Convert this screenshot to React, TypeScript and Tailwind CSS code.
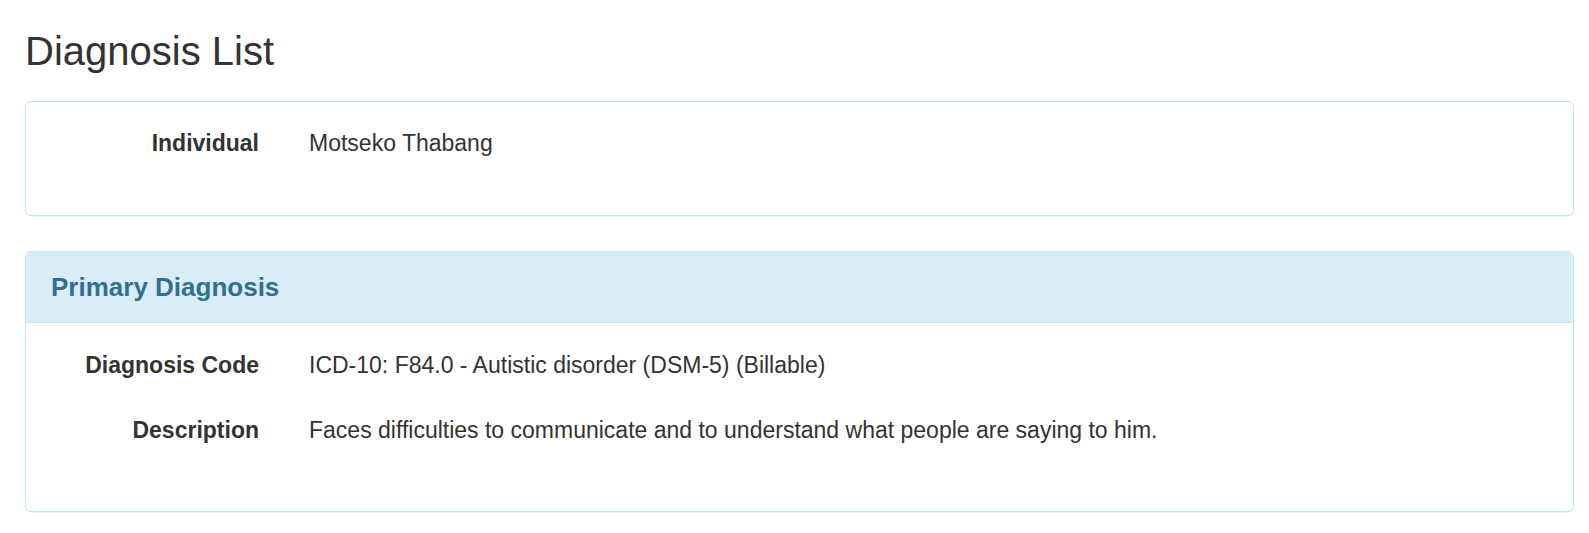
import React from 'react';

const rows = [
    { label: 'Diagnosis Code', value: 'ICD-10: F84.0 - Autistic disorder (DSM-5) (Billable)' },
    { label: 'Description', value: 'Faces difficulties to communicate and to understand what people are saying to him.' },
];

export default function App() {
    return (
        <div className="min-h-screen bg-white pl-[25px] pr-[15px] pt-[29px] text-[#333] font-['Liberation_Sans',Arial,sans-serif]">
            <h1 className="text-[40px] leading-[44px] font-normal">Diagnosis List</h1>

            <div className="mt-[28px] rounded-[6px] border border-[#bce8f1] bg-white shadow-[0_1px_1px_rgba(0,0,0,0.05)]">
                <div className="pt-[25px] pb-[55px] grid grid-cols-[233px_1fr] gap-x-[50px] text-[23px] leading-[33px]">
                    <div className="text-right font-bold">Individual</div>
                    <div>Motseko Thabang</div>
                </div>
            </div>

            <div className="mt-[35px] rounded-[6px] border border-[#bce8f1] bg-white shadow-[0_1px_1px_rgba(0,0,0,0.05)] overflow-hidden">
                <div className="bg-[#d9edf7] border-b border-[#bce8f1] px-[25px] py-[20px]">
                    <h3 className="text-[26px] leading-[30px] font-bold text-[#31708f]">Primary Diagnosis</h3>
                </div>
                <div className="pt-[26px] pb-[64px] grid grid-cols-[233px_1fr] gap-x-[50px] gap-y-[32px] text-[23px] leading-[33px]">
                    {rows.map(r => (
                        <React.Fragment key={r.label}>
                            <div className="text-right font-bold">{r.label}</div>
                            <div>{r.value}</div>
                        </React.Fragment>
                    ))}
                </div>
            </div>
        </div>
    );
}
